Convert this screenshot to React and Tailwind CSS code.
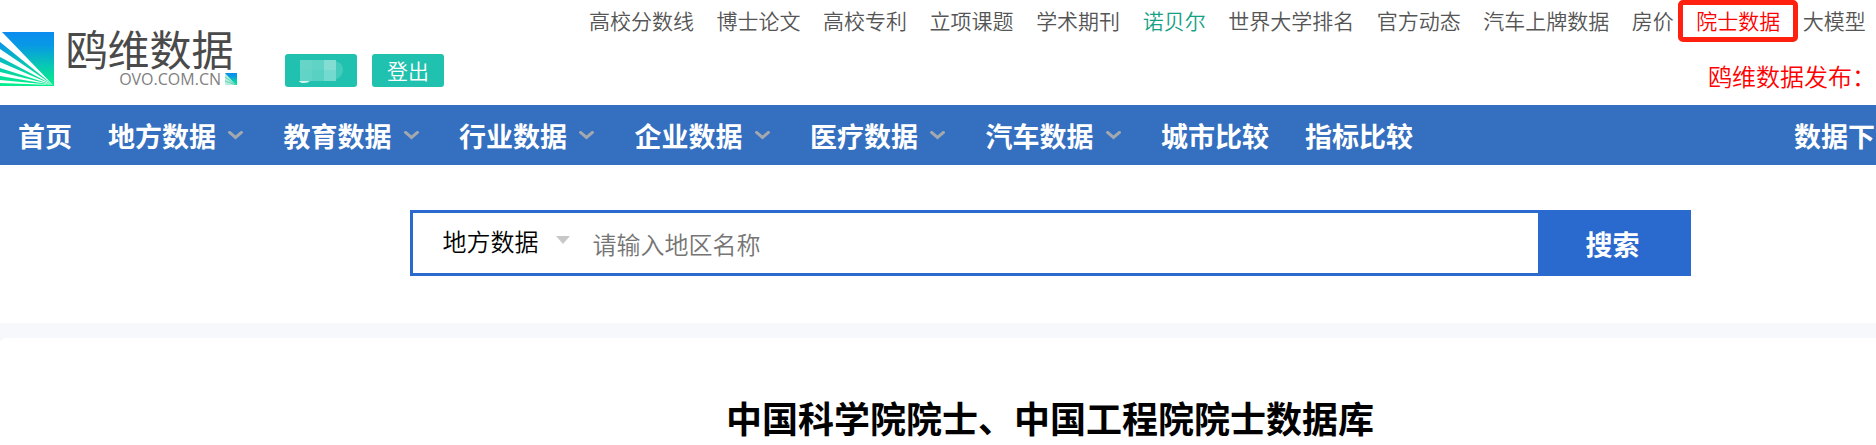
const topLinks = [
  { text: "高校分数线" },
  { text: "博士论文" },
  { text: "高校专利" },
  { text: "立项课题" },
  { text: "学术期刊" },
  { text: "诺贝尔", tone: "text-[#16a085]" },
  { text: "世界大学排名" },
  { text: "官方动态" },
  { text: "汽车上牌数据" },
  { text: "房价" },
  { text: "院士数据", tone: "text-[#ff0000]", boxed: true },
  { text: "大模型" },
];

const menus = ["地方数据", "教育数据", "行业数据", "企业数据", "医疗数据", "汽车数据"];

const LogoMark = () => (
  <svg className="w-[54px] h-[54px] shrink-0" viewBox="0 0 54 54" aria-hidden="true">
    <defs>
      <linearGradient id="mark" x1="0" y1="0" x2="0" y2="1">
        <stop offset="0" stopColor="#0a8cf0" />
        <stop offset="0.25" stopColor="#0899e4" />
        <stop offset="0.65" stopColor="#08cbb0" />
        <stop offset="1" stopColor="#04f08a" />
      </linearGradient>
    </defs>
    <rect width="54" height="54" fill="url(#mark)" />
    <g fill="#fff">
      <path d="M0 0 L2 0 L53 53 L0 10 Z" />
      <path d="M0 17 L53 53 L0 25 Z" />
      <path d="M0 30 L53 53 L0 36 Z" />
      <path d="M0 40 L53 53 L0 44 Z" />
      <path d="M0 48 L53 53 L0 51 Z" />
    </g>
  </svg>
);

const Logo = () => (
  <a href="#" className="flex shrink-0 items-start" aria-label="鸥维数据">
    <LogoMark />
    <span className="ml-2 flex w-[175px] flex-col">
      <span className="h-[38px] text-center text-[42px] leading-8 font-normal text-[#4a4a4a] whitespace-nowrap">鸥维数据</span>
      <span className="flex items-center justify-end gap-1 h-[18px]">
        <span className="text-base leading-4 font-normal text-[#808080] font-['Open_Sans',sans-serif]">OVO.COM.CN</span>
        <svg className="w-3 h-3" viewBox="0 0 12 12" aria-hidden="true">
          <rect width="12" height="12" fill="url(#mark)" />
          <path d="M0 0 L11 12 L0 12 Z" fill="#b9ecdc" />
          <path d="M0 4 L11 12 M0 8 L11 12" stroke="#3fd0b0" strokeWidth="0.8" />
        </svg>
      </span>
    </span>
  </a>
);

const Chevron = () => (
  <svg className="w-[15px] h-[9px] self-center" viewBox="0 0 15 9" aria-hidden="true">
    <path d="M0.5 0.5 L7.5 6.5 L14.5 0.5" fill="none" stroke="#a3a8ae" strokeWidth="3" />
  </svg>
);

const Header = () => (
  <header className="flex h-[105px]">
    <div className="flex items-start gap-12 pt-8">
      <Logo />
      <div className="flex gap-[15px] pt-[22px]">
        <button type="button" aria-label="用户" className="w-[72px] h-[33px] rounded-[3px] bg-[#20c1ae] pl-[14px]">
          <svg className="block w-[46px] h-6" viewBox="0 0 46 24" aria-hidden="true">
            <path d="M36 2 Q43 3 44 10 Q44 18 36 21 Z" fill="#43cbbb" />
            <rect x="1" y="1" width="12" height="10" fill="#66d5c8" />
            <rect x="13" y="1" width="12" height="10" fill="#60d3c6" />
            <rect x="25" y="1" width="12" height="10" fill="#84ddd3" />
            <rect x="1" y="11" width="12" height="11" fill="#62d4c7" />
            <rect x="13" y="11" width="12" height="11" fill="#58d1c3" />
            <rect x="25" y="11" width="12" height="11" fill="#74d9ce" />
            <path d="M0 22 H11 Q9 24 5 24 Q1 24 0 22 Z" fill="#d5f4f0" />
          </svg>
        </button>
        <button type="button" className="w-[72px] h-[33px] rounded-[3px] bg-[#20c1ae] text-[21px] leading-[33px] text-white">登出</button>
      </div>
    </div>
    <div className="ml-auto flex flex-col items-end">
      <nav className="flex w-[1277px] mr-2.5 justify-between text-[21px] leading-10 text-[#555] whitespace-nowrap">
        {topLinks.map((link) => (
          <a key={link.text} href="#" className={`relative ${link.tone || ""}`}>
            {link.text}
            {link.boxed && <span className="absolute -inset-x-[18px] top-0 h-[42px] rounded-[5px] border-[5px] border-[#ff2010]" />}
          </a>
        ))}
      </nav>
      <p className="mt-[18px] text-2xl leading-9 text-[#ff0000] whitespace-nowrap">鸥维数据发布：</p>
    </div>
  </header>
);

const MainNav = () => (
  <nav className="flex h-[60px] bg-[#346fc0] text-[27px] leading-[62px] font-bold text-white whitespace-nowrap">
    <a href="#" className="px-[18px]">首页</a>
    <div className="grid w-[1053px] shrink-0 grid-cols-6">
      {menus.map((menu) => (
        <a key={menu} href="#" className="flex h-[60px] items-start gap-3 pl-[18px]">
          {menu}
          <Chevron />
        </a>
      ))}
    </div>
    <a href="#" className="px-[18px]">城市比较</a>
    <a href="#" className="px-[18px]">指标比较</a>
    <a href="#" className="ml-auto w-[82px] shrink-0">数据下载</a>
  </nav>
);

const SearchBar = () => (
  <form className="mx-auto flex h-[66px] w-[1281px] border-[3px] border-[#2a69cd]" onSubmit={(e) => e.preventDefault()}>
    <div className="relative w-[157px]">
      <select aria-label="数据类型" className="h-14 w-full appearance-none bg-transparent pl-[30px] text-2xl text-black outline-none">
        {menus.map((menu) => <option key={menu}>{menu}</option>)}
      </select>
      <svg className="pointer-events-none absolute right-0 top-[23px] w-3.5 h-2" viewBox="0 0 14 8" aria-hidden="true">
        <path d="M0 0 H14 L7 8 Z" fill="#c8c8c8" />
      </svg>
    </div>
    <input
      type="text"
      aria-label="地区名称"
      placeholder="请输入地区名称"
      className="min-w-0 flex-1 pl-[23px] pt-0.5 text-2xl outline-none placeholder:text-[#757575]"
    />
    <button type="submit" className="w-[150px] bg-[#2a69cd] pt-0.5 text-[27px] font-bold text-white">搜索</button>
  </form>
);

export default function App() {
  return (
    <div className="overflow-hidden bg-white font-[350] font-['Noto_Sans_CJK_SC',sans-serif]">
      <Header />
      <MainNav />
      <main className="min-w-[2100px] bg-[#f6f8fb]">
        <section className="bg-white pt-[45px] pb-[47px]">
          <SearchBar />
        </section>
        <section className="mt-[15px] rounded-md bg-white pt-[53px] pb-4">
          <h1 className="text-center text-4xl leading-[52px] font-bold text-black">中国科学院院士、中国工程院院士数据库</h1>
        </section>
      </main>
    </div>
  );
}
